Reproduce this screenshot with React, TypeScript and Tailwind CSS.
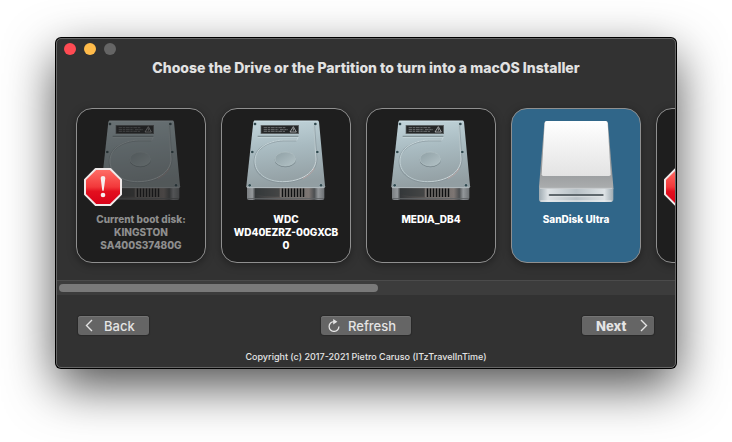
import { useId, useState } from "react";

type Kind = "internal" | "removable";

interface Drive {
  id: number;
  kind: Kind;
  lines: string[];
  blocked?: boolean;
}

const drives: Drive[] = [
  { id: 0, kind: "internal", lines: ["Current boot disk:", "KINGSTON", "SA400S37480G"], blocked: true },
  { id: 1, kind: "internal", lines: ["WDC", "WD40EZRZ-00GXCB", "0"] },
  { id: 2, kind: "internal", lines: ["MEDIA_DB4"] },
  { id: 3, kind: "removable", lines: ["SanDisk Ultra"] },
  { id: 4, kind: "internal", lines: [], blocked: true },
];

const screws = [
  [27, 12],
  [208, 12],
  [19, 96],
  [214, 96],
  [11, 196],
  [225, 196],
];

const vents = [107, 116, 125, 134, 143, 152, 161, 170];

function HardDiskIcon() {
  const id = useId();
  return (
    <svg viewBox="0 0 240 252" className="h-[84px] w-20" aria-hidden="true">
      <defs>
        <linearGradient id={`${id}p`} x1="0" y1="0" x2="0.15" y2="1">
          <stop offset="0" stopColor="#c3d6dc" />
          <stop offset="0.45" stopColor="#a9bbc1" />
          <stop offset="1" stopColor="#929ea2" />
        </linearGradient>
        <linearGradient id={`${id}b`} x1="0" y1="0" x2="1" y2="0">
          <stop offset="0" stopColor="#7b7f82" />
          <stop offset="0.07" stopColor="#94989b" />
          <stop offset="0.11" stopColor="#35383a" />
          <stop offset="0.4" stopColor="#5b5755" />
          <stop offset="0.8" stopColor="#7d7673" />
          <stop offset="0.87" stopColor="#4b4e50" />
          <stop offset="0.92" stopColor="#93979a" />
          <stop offset="1" stopColor="#6d7174" />
        </linearGradient>
        <linearGradient id={`${id}h`} x1="0" y1="0" x2="1" y2="1">
          <stop offset="0" stopColor="#8fa0a5" />
          <stop offset="1" stopColor="#b3c2c6" />
        </linearGradient>
        <linearGradient id={`${id}r`} x1="0" y1="0" x2="1" y2="1">
          <stop offset="0" stopColor="#d3e2e6" />
          <stop offset="0.6" stopColor="#b7c6ca" />
          <stop offset="1" stopColor="#d8dfe1" />
        </linearGradient>
      </defs>
      <path d="M3 200H235V234Q235 240 229 240H9Q3 240 3 234Z" fill={`url(#${id}b)`} />
      <path d="M28 205H100V230Q60 232 28 222Z" fill="#34383a" opacity=".6" />
      <path d="M4 236H234" stroke="#5f6365" strokeWidth="3" />
      <rect x="103" y="205" width="74" height="27" fill="#85817e" />
      {vents.map((x) => (
        <rect key={x} x={x} y="205" width="5" height="26" fill="#0f1011" />
      ))}
      <path d="M27 2H214Q218 2 219 6L237 198Q237 204 232 204H6Q1 204 1 198L22 6Q23 2 27 2Z" fill={`url(#${id}p)`} />
      <path d="M2 199Q3 203 6 203H232Q236 203 237 199" fill="none" stroke="#c4cccf" strokeWidth="2" />
      <path d="M24 3H217" stroke="#dcecf0" strokeWidth="2" />
      <path d="M35 49H157" stroke="#7c8b90" strokeWidth="4" />
      <path d="M35 52H157L151 62" fill="none" stroke="#cfdde1" strokeWidth="2" />
      <path
        d="M151 62H112C62 64 25 88 25 125C25 162 62 187 110 187C166 187 212 158 212 118L205 17"
        fill="none"
        stroke="#77868b"
        strokeWidth="5"
        opacity=".45"
      />
      <path
        d="M151 60H112C62 62 27 88 27 123C27 160 62 185 110 185C166 185 210 157 210 117L203 17"
        fill="none"
        stroke={`url(#${id}r)`}
        strokeWidth="3"
      />
      <path d="M170 176Q196 164 205 145" fill="none" stroke="#c8a9a6" strokeWidth="3" opacity=".7" />
      <ellipse cx="118" cy="119" rx="32" ry="23" fill="#69787d" opacity=".7" />
      <ellipse cx="118" cy="117" rx="31" ry="21" fill={`url(#${id}h)`} stroke="#b7c5c9" strokeWidth="2" />
      <rect x="45" y="16" width="113" height="25" fill="#242627" stroke="#64696b" strokeWidth="2" />
      <path d="M53 23H120M53 29H98M102 29H126M53 34H118" stroke="#8f9496" strokeWidth="2" strokeDasharray="11 2 7 2" />
      <path d="M142 20L151 36H132ZM142 25V32" fill="none" stroke="#d5d8d9" strokeWidth="2" />
      {screws.map(([x, y]) => (
        <g key={`${x}-${y}`}>
          <circle cx={x} cy={y} r="5" fill="#b9c7cb" />
          <circle cx={x} cy={y} r="4" fill="#30494f" />
        </g>
      ))}
    </svg>
  );
}

function RemovableDiskIcon() {
  const id = useId();
  return (
    <svg viewBox="0 0 240 252" className="h-[84px] w-20" aria-hidden="true">
      <defs>
        <linearGradient id={`${id}t`} x1="0" y1="0" x2="0" y2="1">
          <stop offset="0" stopColor="#ffffff" />
          <stop offset="1" stopColor="#e3e3e3" />
        </linearGradient>
        <linearGradient id={`${id}g`} x1="0" y1="0" x2="0" y2="1">
          <stop offset="0.75" stopColor="#999c9e" />
          <stop offset="1" stopColor="#acaeaf" />
        </linearGradient>
        <linearGradient id={`${id}f`} x1="0" y1="0" x2="1" y2="0">
          <stop offset="0" stopColor="#9fabb2" />
          <stop offset="0.12" stopColor="#dde2e5" />
          <stop offset="0.5" stopColor="#b9c2c7" />
          <stop offset="0.88" stopColor="#dde2e5" />
          <stop offset="1" stopColor="#9fabb2" />
        </linearGradient>
      </defs>
      <path d="M32 3H209Q215 3 216 9L232 200V208H9V200L25 9Q26 3 32 3Z" fill={`url(#${id}g)`} />
      <path d="M32 3H209Q214 3 215 9L224 163Q224 168 219 168H22Q17 168 17 163L26 9Q27 3 32 3Z" fill={`url(#${id}t)`} />
      <path d="M9 203Q14 206 22 206H219Q228 206 232 203V238Q232 246 224 246H17Q9 246 9 238Z" fill={`url(#${id}f)`} />
      <path d="M12 205H229" stroke="#d9dddf" strokeWidth="2" />
      <path d="M13 243H227" stroke="#eceff0" strokeWidth="3" />
      <rect x="38" y="222" width="165" height="6" rx="3" fill="#5f686d" />
      <path d="M40 230H201" stroke="#e6eaec" strokeWidth="2" />
    </svg>
  );
}

function StopBadge() {
  const id = useId();
  return (
    <svg viewBox="0 0 114 114" className="absolute top-[59px] left-[7px] size-[38px]" aria-hidden="true">
      <defs>
        <linearGradient id={id} x1="0" y1="0" x2="0" y2="1">
          <stop offset="0" stopColor="#ff7068" />
          <stop offset="0.5" stopColor="#f2383a" />
          <stop offset="0.62" stopColor="#e3101f" />
          <stop offset="1" stopColor="#d80018" />
        </linearGradient>
      </defs>
      <path
        d="M35 3H79L111 35V79L79 111H35L3 79V35Z"
        fill={`url(#${id})`}
        stroke="#efe9e9"
        strokeWidth="6"
        strokeLinejoin="round"
      />
      <path d="M50 30Q50 24 57 24Q64 24 64 30L59 68H55Z" fill="#f6eeee" />
      <circle cx="57" cy="81" r="7" fill="#f6eeee" />
    </svg>
  );
}

function DriveCard({ drive, selected, onSelect }: { drive: Drive; selected: boolean; onSelect: () => void }) {
  return (
    <button
      type="button"
      disabled={drive.blocked}
      aria-pressed={selected}
      onClick={onSelect}
      className={`relative flex h-[155px] w-[130px] shrink-0 flex-col items-center rounded-[16px] border border-[#8f8f8f] pt-[11px] shadow-[0_2px_8px_rgba(0,0,0,0.35)] ${
        selected ? "bg-[#306689]" : "bg-[#1e1e1e]"
      }`}
    >
      <span className={drive.blocked ? "opacity-45" : ""}>
        {drive.kind === "internal" ? <HardDiskIcon /> : <RemovableDiskIcon />}
      </span>
      {drive.blocked && <StopBadge />}
      <span
        className={`mt-[9px] flex flex-col text-[10px] leading-[13px] font-extrabold whitespace-nowrap ${
          drive.blocked ? "text-[#8e8e8e]" : "text-white"
        }`}
      >
        {drive.lines.map((line) => (
          <span key={line}>{line}</span>
        ))}
      </span>
    </button>
  );
}

const pushButton =
  "flex h-[19px] items-center rounded-[3px] bg-[#656565] text-[13px] leading-4 text-[#e4e4e4] shadow-[0_0_1px_1px_rgba(0,0,0,0.2),inset_0_1px_0_#757575]";

export default function App() {
  const [selected, setSelected] = useState(3);

  return (
    <div className="bg-white px-14 pt-[38px] pb-[74px] font-['Inter','Liberation_Sans',sans-serif]">
      <main className="flex flex-col overflow-hidden rounded-[5px] border border-[#666666] bg-[#323232] shadow-[0_0_0_1px_#000000,0_18px_50px_rgba(0,0,0,0.7)]">
        <header>
          <div className="flex gap-2 px-[7px] pt-1">
            <button type="button" aria-label="Close" className="size-3 rounded-full bg-[#ff4b53]" />
            <button type="button" aria-label="Minimize" className="size-3 rounded-full bg-[#ffbb4a]" />
            <button type="button" aria-label="Zoom" disabled className="size-3 rounded-full bg-[#656565]" />
          </div>
          <h1 className="mt-[3px] text-center text-[14px] leading-5 font-extrabold text-[#e2e2e2]">
            Choose the Drive or the Partition to turn into a macOS Installer
          </h1>
        </header>

        <section className="mt-5 flex gap-[15px] overflow-x-auto px-[19px] pt-[10px] pb-[17px] [scrollbar-width:none]">
          {drives.map((drive) => (
            <DriveCard
              key={drive.id}
              drive={drive}
              selected={drive.id === selected}
              onSelect={() => setSelected(drive.id)}
            />
          ))}
        </section>
        <div className="h-[15px] border-t border-[#4b4b4b] bg-[#3c3c3c] px-0.5 pt-[3px]">
          <div className="h-2 w-[52%] rounded-full bg-[#797979]" />
        </div>

        <footer className="px-[21px] pt-[21px] pb-1">
          <div className="grid grid-cols-3 items-center">
            <button type="button" className={`${pushButton} w-[71px] gap-[11px] pl-[7px] font-medium`}>
              <svg viewBox="0 0 8 13" className="h-[13px] w-2" fill="none" stroke="#e4e4e4" strokeWidth="1.4">
                <path d="M7 1L1.5 6.5L7 12" />
              </svg>
              Back
            </button>
            <button type="button" className={`${pushButton} w-[90px] gap-2 justify-self-center pl-[7px] font-medium`}>
              <svg viewBox="0 0 12 13" className="h-[13px] w-3" fill="none">
                <path d="M6 2.6A4.9 4.9 0 1 0 10.9 7.5" stroke="#e4e4e4" strokeWidth="1.3" />
                <path d="M5.2 0L9.4 2.7L5.2 5.4Z" fill="#e4e4e4" />
              </svg>
              Refresh
            </button>
            <button
              type="button"
              className={`${pushButton} w-[72px] justify-between justify-self-end pr-[6px] pl-[14px] font-extrabold`}
            >
              Next
              <svg viewBox="0 0 8 13" className="h-[13px] w-2" fill="none" stroke="#e4e4e4" strokeWidth="1.4">
                <path d="M1 1L6.5 6.5L1 12" />
              </svg>
            </button>
          </div>
          <p className="mt-[15px] text-center text-[9px] leading-[13px] font-medium text-[#e4e4e4]">
            Copyright (c) 2017-2021 Pietro Caruso (ITzTravelInTime)
          </p>
        </footer>
      </main>
    </div>
  );
}
